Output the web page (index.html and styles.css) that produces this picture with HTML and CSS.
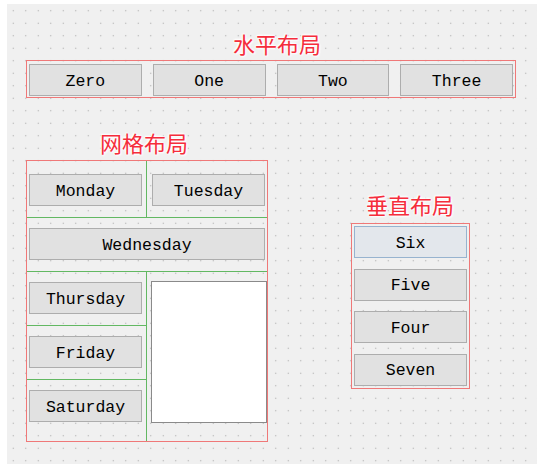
FILE: index.html
```html
<!DOCTYPE html>
<html>
<head>
<meta charset="utf-8">
<link rel="stylesheet" href="styles.css">
</head>
<body>
<div class="canvas">
  <div class="title title-h">水平布局</div>
  <div class="hbox">
    <div class="btn">Zero</div>
    <div class="btn">One</div>
    <div class="btn">Two</div>
    <div class="btn">Three</div>
  </div>

  <div class="title title-g">网格布局</div>
  <div class="grid">
    <div class="cell c-mon"><div class="btn">Monday</div></div>
    <div class="cell c-tue"><div class="btn">Tuesday</div></div>
    <div class="cell c-wed"><div class="btn">Wednesday</div></div>
    <div class="cell c-left"><div class="btn">Thursday</div></div>
    <div class="cell c-white"><div class="whitebox"></div></div>
    <div class="cell c-left"><div class="btn">Friday</div></div>
    <div class="cell c-left c-last"><div class="btn">Saturday</div></div>
  </div>

  <div class="title title-v">垂直布局</div>
  <div class="vbox">
    <div class="btn btn-focus">Six</div>
    <div class="btn">Five</div>
    <div class="btn">Four</div>
    <div class="btn">Seven</div>
  </div>
</div>
</body>
</html>
```
FILE: styles.css
```css
html, body {
  margin: 0;
  padding: 0;
  background: #ffffff;
}

.canvas {
  position: relative;
  margin: 4px 0 0 7px;
  width: 530px;
  height: 460px;
  background-color: #f0f0f0;
  background-image: radial-gradient(circle at center, #a9a9a9 0px, #b8b8b8 0.5px, rgba(240,240,240,0) 1px);
  background-size: 12.5px 12.5px;
  background-position: 0px 0.5px;
  font-family: "Liberation Mono", "DejaVu Sans Mono", monospace;
}

.title {
  position: absolute;
  font-family: "Noto Sans CJK SC", sans-serif;
  font-size: 22px;
  line-height: 22px;
  color: #f52d3c;
  white-space: nowrap;
  text-shadow: 0 0 1px #fff, 0 0 2px #fff, 0 0 3px #fff, 1px 1px 2px #fff, -1px -1px 2px #fff;
}
.title-h { left: 226px; top: 28px; }
.title-g { left: 93px; top: 127px; }
.title-v { left: 359px; top: 189px; }

.btn {
  box-sizing: border-box;
  height: 32px;
  display: flex;
  align-items: center;
  justify-content: center;
  padding-top: 2px;
  background: #e1e1e1;
  border: 1px solid #adadad;
  font-size: 16.5px;
  color: #000;
  white-space: nowrap;
}
.btn-focus {
  background: #e3e7ec;
  border-color: #97b3cf;
}

.hbox {
  position: absolute;
  left: 19px;
  top: 56px;
  box-sizing: border-box;
  width: 490px;
  height: 38px;
  border: 1px solid #ef7878;
  padding: 3px 2px 1px 2px;
  display: flex;
  gap: 11px;
}
.hbox .btn { flex: 1; height: 32px; }

.grid {
  position: absolute;
  left: 19px;
  top: 156px;
  box-sizing: border-box;
  width: 242px;
  height: 282px;
  border: 1px solid #ef7878;
  display: grid;
  grid-template-columns: 120px 120px;
  grid-template-rows: 57px 54px 54px 54px 61px;
}
.cell {
  box-sizing: border-box;
  padding-top: 10px;
}
.c-mon {
  padding-top: 13px;
  padding-left: 2px;
  border-right: 1px solid #62b862;
  border-bottom: 1px solid #62b862;
}
.c-tue {
  padding-top: 13px;
  padding-left: 5px;
  border-bottom: 1px solid #62b862;
}
.c-wed {
  grid-column: 1 / 3;
  padding-left: 2px;
  border-bottom: 1px solid #62b862;
}
.c-mon .btn, .c-tue .btn, .c-left .btn { width: 113px; }
.c-wed .btn { width: 236px; }
.c-left {
  grid-column: 1;
  padding-left: 2px;
  border-right: 1px solid #62b862;
  border-bottom: 1px solid #62b862;
}
.c-left.c-last { border-bottom: none; }
.c-white {
  grid-column: 2;
  grid-row: 3 / 6;
  padding-top: 9px;
  padding-left: 4px;
}
.whitebox {
  box-sizing: border-box;
  width: 116px;
  height: 142px;
  background: #ffffff;
  border: 1px solid #8a8a8a;
}

.vbox {
  position: absolute;
  left: 344px;
  top: 219px;
  box-sizing: border-box;
  width: 119px;
  height: 166px;
  border: 1px solid #ef7878;
  padding: 2px 2px 0 2px;
  display: flex;
  flex-direction: column;
  gap: 10.5px;
}
.vbox .btn { width: 113px; }
```
